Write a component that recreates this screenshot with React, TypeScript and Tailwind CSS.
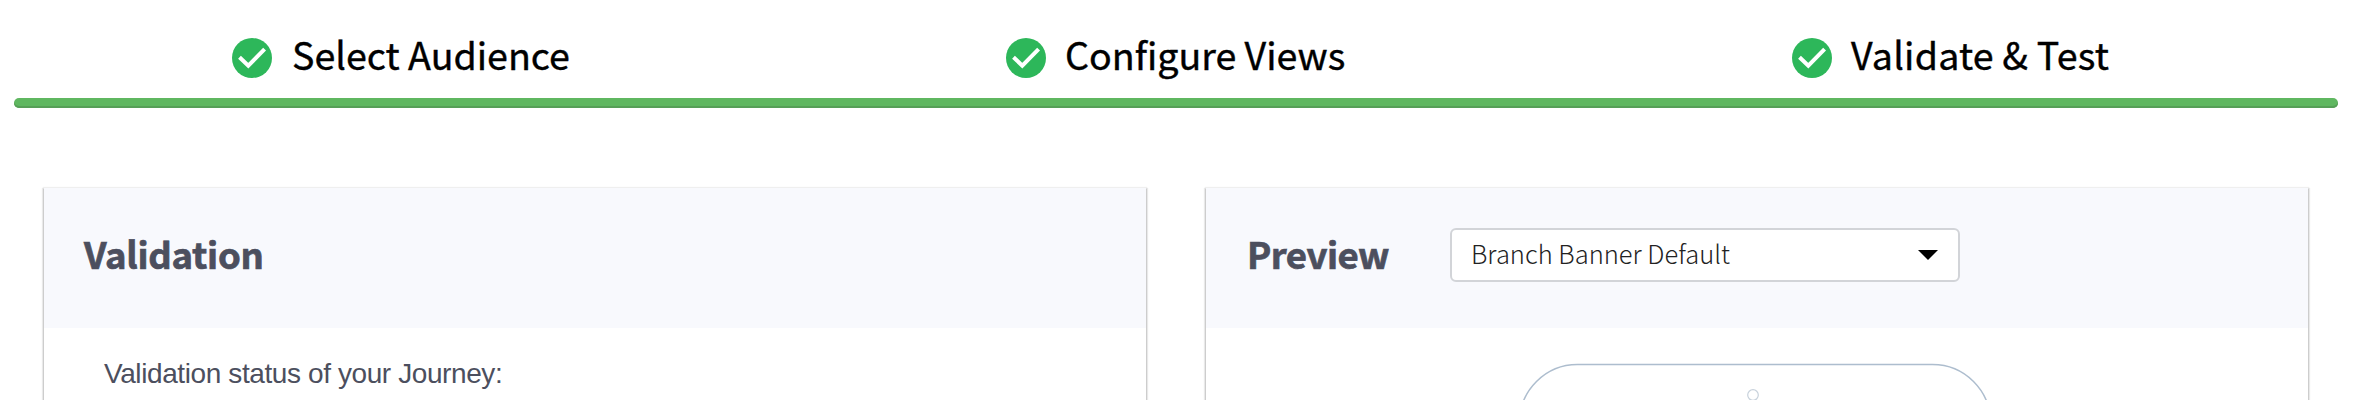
import React from "react";

const steps = [
  { label: "Select Audience", cls: "ml-[232px] w-[774px] gap-5" },
  { label: "Configure Views", cls: "w-[786px] gap-[19px]" },
  { label: "Validate & Test", cls: "tracking-[0.2px] gap-[19px]" },
];

function CheckIcon() {
  return (
    <svg className="size-10 shrink-0" viewBox="0 0 40 40">
      <circle cx="20" cy="20" r="20" fill="#2db75a" />
      <path d="M7.5 19.2 L16.3 27.7 L32.6 11.2" fill="none" stroke="#fff" strokeWidth="4" />
    </svg>
  );
}

function Card({ title, titleClass, extra, children }: { title: string; titleClass: string; extra?: React.ReactNode; children: React.ReactNode }) {
  return (
    <section className="h-[400px] w-[1102px] shrink-0 bg-white shadow-[0_2px_0_1px_rgba(0,0,0,0.08),0_2px_1px_2px_rgba(0,0,0,0.08),0_0_1px_1px_rgba(0,0,0,0.05)]">
      <header className="flex h-[140px] items-center bg-[#f8f9fd] pl-10">
        <h2 className={`pb-2 whitespace-nowrap text-[36.5px] leading-[40px] font-bold text-[#4c4f5e] [-webkit-text-stroke:0.7px_#4c4f5e] ${titleClass}`}>{title}</h2>
        {extra}
      </header>
      {children}
    </section>
  );
}

export default function App() {
  return (
    <main className="h-[400px] w-[2356px] overflow-hidden bg-white font-['Noto_Sans_CJK_SC',sans-serif]">
      <nav className="flex h-[98px] pt-[38px]">
        {steps.map((s) => (
          <div key={s.label} className={`flex h-10 shrink-0 items-center text-[37.6px] leading-[40px] whitespace-nowrap text-black [-webkit-text-stroke:0.4px_#000] ${s.cls}`}>
            <CheckIcon />
            <span className="pb-2">{s.label}</span>
          </div>
        ))}
      </nav>
      <div className="mr-[18px] ml-[14px] h-[10px] rounded-[5px] bg-[#5fb760] shadow-[inset_0_-2px_0_#569f57]" />
      <div className="mt-20 flex gap-[60px] pl-11">
        <Card title="Validation" titleClass="tracking-[-0.3px]">
          <p className="pt-7 pl-[60px] font-['Liberation_Sans',sans-serif] text-[28px] leading-[36px] tracking-[-0.4px] whitespace-nowrap text-[#4c4f5e]">
            Validation status of your Journey:
          </p>
        </Card>
        <Card
          title="Preview"
          titleClass="w-[204px] pl-px tracking-[-0.5px]"
          extra={
            <div className="mb-[6px] flex h-[54px] w-[510px] items-center justify-between rounded-md border-2 border-[#d2d4d8] bg-white pr-5 pl-[19px] text-[25.5px] leading-[36px] font-light whitespace-nowrap text-[#222]">
              <span className="pb-1">Branch Banner Default</span>
              <svg className="h-[10px] w-5" viewBox="0 0 20 10">
                <path d="M0 0H20L10 10Z" fill="#000" />
              </svg>
            </div>
          }
        >
          <svg className="mt-8 ml-[310px] block h-[80px] w-[480px]" viewBox="0 0 480 80" fill="none">
            <path d="M3.5 80V62.5A58 58 0 0 1 61.5 4.5H416.5A58 58 0 0 1 474.5 62.5V80" stroke="#adbdce" strokeWidth="1.5" />
            <circle cx="237" cy="35" r="5.3" stroke="#c8d2dc" strokeWidth="1.2" />
          </svg>
        </Card>
      </div>
    </main>
  );
}
